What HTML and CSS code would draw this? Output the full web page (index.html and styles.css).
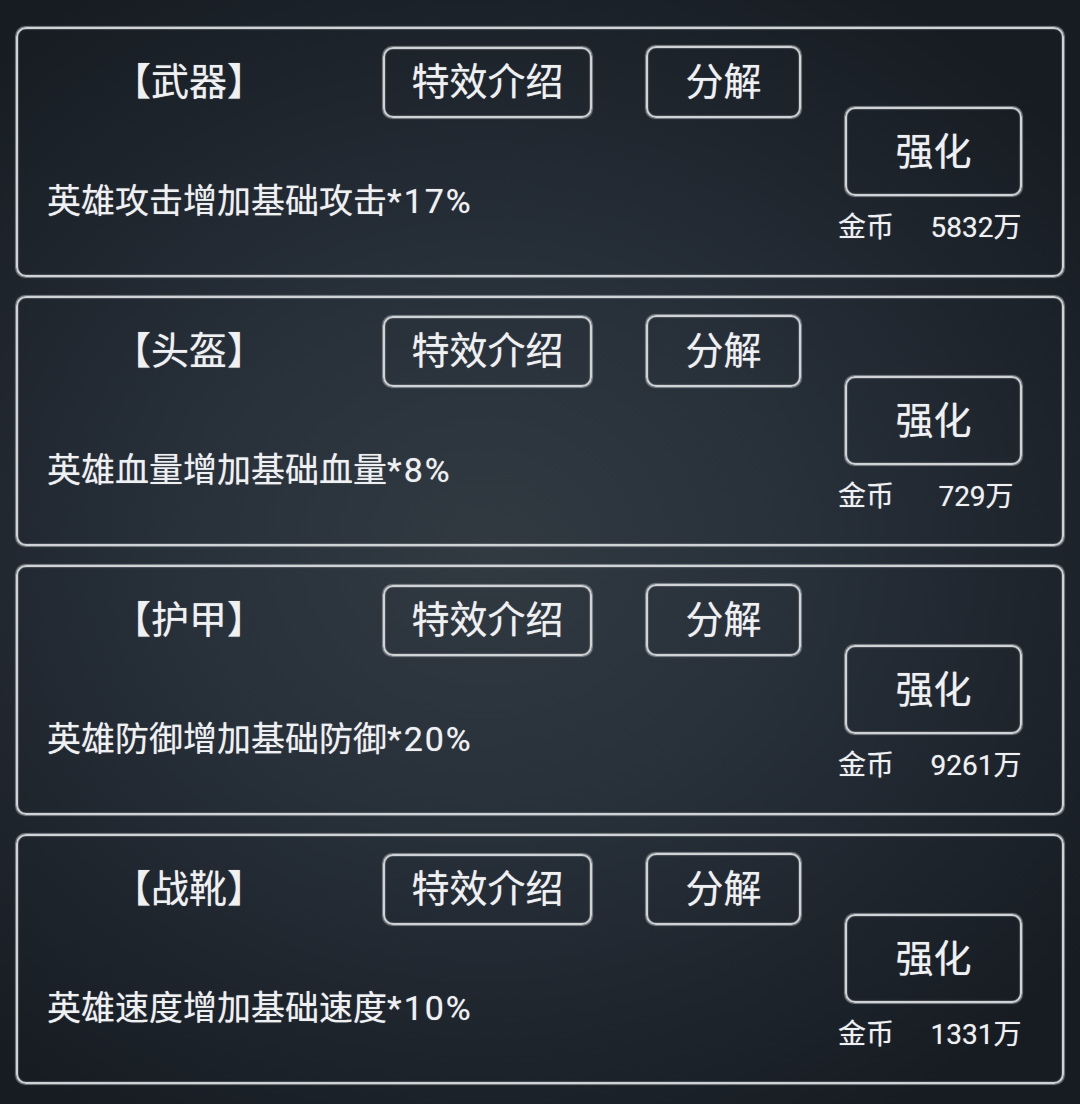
FILE: index.html
```html
<!DOCTYPE html>
<html lang="zh-CN">
<head>
<meta charset="utf-8">
<title>装备</title>
<link rel="stylesheet" href="styles.css">
</head>
<body>
<div class="list">
  <div class="card">
    <div class="main">
      <div class="top">
        <div class="title">【武器】</div>
        <div class="btn btn-fx">特效介绍</div>
        <div class="btn btn-split">分解</div>
      </div>
      <div class="desc">英雄攻击增加基础攻击<span class="pct">*17%</span></div>
    </div>
    <div class="side">
      <div class="btn btn-up">强化</div>
      <div class="coin"><span class="coin-label">金币</span><span class="coin-value">5832万</span></div>
    </div>
  </div>
  <div class="card">
    <div class="main">
      <div class="top">
        <div class="title">【头盔】</div>
        <div class="btn btn-fx">特效介绍</div>
        <div class="btn btn-split">分解</div>
      </div>
      <div class="desc">英雄血量增加基础血量<span class="pct">*8%</span></div>
    </div>
    <div class="side">
      <div class="btn btn-up">强化</div>
      <div class="coin"><span class="coin-label">金币</span><span class="coin-value">729万</span></div>
    </div>
  </div>
  <div class="card">
    <div class="main">
      <div class="top">
        <div class="title">【护甲】</div>
        <div class="btn btn-fx">特效介绍</div>
        <div class="btn btn-split">分解</div>
      </div>
      <div class="desc">英雄防御增加基础防御<span class="pct">*20%</span></div>
    </div>
    <div class="side">
      <div class="btn btn-up">强化</div>
      <div class="coin"><span class="coin-label">金币</span><span class="coin-value">9261万</span></div>
    </div>
  </div>
  <div class="card">
    <div class="main">
      <div class="top">
        <div class="title">【战靴】</div>
        <div class="btn btn-fx">特效介绍</div>
        <div class="btn btn-split">分解</div>
      </div>
      <div class="desc">英雄速度增加基础速度<span class="pct">*10%</span></div>
    </div>
    <div class="side">
      <div class="btn btn-up">强化</div>
      <div class="coin"><span class="coin-label">金币</span><span class="coin-value">1331万</span></div>
    </div>
  </div>
</div>
</body>
</html>
```

FILE: styles.css
```css
html, body {
  margin: 0;
  padding: 0;
  height: 100%;
}

body {
  background: radial-gradient(ellipse 70% 60% at 45% 50%, #313941 0%, #28303a 40%, #1e252d 72%, #171c22 100%);
  font-family: "Roboto", "Noto Sans CJK SC", sans-serif;
  color: #eef0f2;
  text-shadow: 0 0 1px rgba(255, 255, 255, 0.55);
  overflow: hidden;
}

.list {
  display: flex;
  flex-direction: column;
  gap: 19px;
  padding: 27px 16px 0 16px;
}

.card {
  box-sizing: border-box;
  height: 250px;
  border: 2px solid #d0d3d6;
  border-radius: 10px;
  display: flex;
  box-shadow: 0 0 1px 0.5px rgba(200, 205, 210, 0.55), inset 0 0 1px 0.5px rgba(200, 205, 210, 0.4);
}

.main {
  flex: 1;
  padding-top: 17px;
}

.top {
  display: flex;
  align-items: center;
  height: 72px;
}

.title {
  margin-left: 95px;
  width: 152px;
  font-size: 38px;
  line-height: 44px;
  white-space: nowrap;
}

.btn {
  box-sizing: border-box;
  border: 2px solid #d0d3d6;
  border-radius: 10px;
  display: flex;
  align-items: center;
  justify-content: center;
  font-size: 38px;
  line-height: 44px;
  white-space: nowrap;
  box-shadow: 0 0 1px 0.5px rgba(200, 205, 210, 0.55), inset 0 0 1px 0.5px rgba(200, 205, 210, 0.4);
}

.btn-fx {
  margin-left: 118px;
  width: 209px;
  height: 71px;
}

.btn-split {
  margin-left: 54px;
  width: 155px;
  height: 72px;
}

.desc {
  margin-top: 63px;
  margin-left: 29px;
  font-size: 34px;
  line-height: 40px;
  white-space: nowrap;
}

.pct {
  letter-spacing: 2px;
}

.side {
  width: 224px;
  padding-top: 78px;
}

.btn-up {
  margin-left: 7px;
  width: 177px;
  height: 89px;
}

.coin {
  display: flex;
  margin-top: 16px;
  font-size: 28px;
  line-height: 32px;
  white-space: nowrap;
}

.coin-label {
  width: 56px;
}

.coin-value {
  margin-left: 32px;
  width: 100px;
  text-align: center;
}
```
